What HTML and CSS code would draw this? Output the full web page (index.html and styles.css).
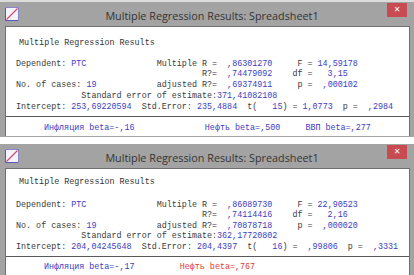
FILE: index.html
```html
<!DOCTYPE html>
<html lang="ru">
<head>
  <meta charset="UTF-8">
  <title>Multiple Regression Results</title>
  <link rel="stylesheet" href="styles.css">
</head>
<body>
  <div class="strip"></div>

  <div class="win">
    <div class="titlebar">
      <span class="app-icon">
        <svg width="14" height="14" viewBox="0 0 14 14">
          <rect x="0.5" y="0.5" width="13" height="13" fill="#f4f2fb" stroke="#8a86c8"/>
          <line x1="1.5" y1="12.5" x2="12.5" y2="1.5" stroke="#d0506a" stroke-width="1.3"/>
          <line x1="0.5" y1="1" x2="0.5" y2="13.5" stroke="#5a55b0"/>
          <line x1="0.5" y1="13.5" x2="13" y2="13.5" stroke="#5a55b0"/>
        </svg>
      </span>
      <span class="title">Multiple Regression Results: Spreadsheet1</span>
      <span class="close">&#x2715;</span>
    </div>
    <div class="frame">
      <div class="sheet">
        <div class="heading">Multiple Regression Results</div>
<pre class="stats">Dependent: <span class="v">PTC</span>              Multiple R = <span class="v"> ,86301270</span>     F = <span class="v">14,59178</span>
                                     R?= <span class="v"> ,74479092</span>    df = <span class="v">  3,15</span>
No. of cases: <span class="v">19</span>            adjusted R?= <span class="v"> ,69374911</span>     p = <span class="v"> ,000102</span>
             Standard error of estimate:<span class="v">371,41082108</span>
Intercept: <span class="v">253,69220594</span>  Std.Error: <span class="v">235,4884</span>  t(<span class="v">   15</span>) = <span class="v">1,0773</span>  p = <span class="v"> ,2984</span></pre>
        <div class="rule"></div>
<pre class="betas"><span class="v">Инфляция beta=-,16</span>              <span class="v">Нефть beta=,500</span>     <span class="v">ВВП beta=,277</span></pre>
      </div>
    </div>
  </div>

  <div class="win compact">
    <div class="titlebar">
      <span class="app-icon">
        <svg width="14" height="14" viewBox="0 0 14 14">
          <rect x="0.5" y="0.5" width="13" height="13" fill="#f4f2fb" stroke="#8a86c8"/>
          <line x1="1.5" y1="12.5" x2="12.5" y2="1.5" stroke="#d0506a" stroke-width="1.3"/>
          <line x1="0.5" y1="1" x2="0.5" y2="13.5" stroke="#5a55b0"/>
          <line x1="0.5" y1="13.5" x2="13" y2="13.5" stroke="#5a55b0"/>
        </svg>
      </span>
      <span class="title">Multiple Regression Results: Spreadsheet1</span>
      <span class="close">&#x2715;</span>
    </div>
    <div class="frame">
      <div class="sheet">
        <div class="heading">Multiple Regression Results</div>
<pre class="stats">Dependent: <span class="v">PTC</span>              Multiple R = <span class="v"> ,86089730</span>     F = <span class="v">22,90523</span>
                                     R?= <span class="v"> ,74114416</span>    df = <span class="v">  2,16</span>
No. of cases: <span class="v">19</span>            adjusted R?= <span class="v"> ,70878718</span>     p = <span class="v"> ,000020</span>
             Standard error of estimate:<span class="v">362,17720802</span>
Intercept: <span class="v">204,04245648</span>  Std.Error: <span class="v">204,4397</span>  t(<span class="v">   16</span>) = <span class="v"> ,99806</span>  p = <span class="v"> ,3331</span></pre>
        <div class="rule"></div>
<pre class="betas"><span class="v">Инфляция beta=-,17</span>         <span class="r">Нефть beta=,767</span></pre>
      </div>
    </div>
  </div>
</body>
</html>
```

FILE: styles.css
```css
body {
  margin: 0;
  background-color: white;
  font-family: "Liberation Mono", "Courier New", monospace;
  overflow: hidden;
}
.strip {
  height: 2px;
  background-color: #dcdcdc;
}
.win {
  margin-bottom: 7px;
  background-color: #a3a3a3;
}
.titlebar {
  display: flex;
  align-items: flex-start;
  height: 24px;
  padding: 0 7px 0 5px;
}
.app-icon {
  margin-top: 5px;
  width: 14px;
  height: 14px;
}
.app-icon svg {
  display: block;
}
.title {
  flex: 1;
  text-align: center;
  font-family: "Open Sans", "Noto Sans", sans-serif;
  font-size: 10.8px;
  line-height: 28px;
  color: #333;
  padding-left: 18px;
}
.close {
  margin-top: 1px;
  width: 20px;
  height: 14px;
  background-color: #c74b50;
  color: white;
  font-family: "DejaVu Sans", sans-serif;
  font-size: 8px;
  line-height: 14px;
  text-align: center;
}
.frame {
  padding: 0 4px 1px 5px;
}
.sheet {
  background-color: white;
  border: 1px solid #707070;
  border-bottom: none;
  padding-bottom: 2px;
}
.heading {
  font-size: 8.4px;
  line-height: 10.7px;
  color: #333;
  padding: 11px 0 0 13px;
}
.stats {
  margin: 10px 0 0 10px;
  font-family: inherit;
  font-size: 8.4px;
  line-height: 10.7px;
  color: #3a3a3a;
}
.v {
  color: #3c3cc4;
}
.r {
  color: #e23a3a;
}
.rule {
  margin-top: 4px;
  border-top: 1px solid #5a5a5a;
}
.betas {
  margin: 6px 0 0 38px;
  font-family: inherit;
  font-size: 8.4px;
  line-height: 10.7px;
}
.compact .heading {
  padding-top: 8px;
}
.compact .stats {
  margin-top: 12px;
  line-height: 10.5px;
}
.compact .betas {
  margin-top: 5px;
}
```
